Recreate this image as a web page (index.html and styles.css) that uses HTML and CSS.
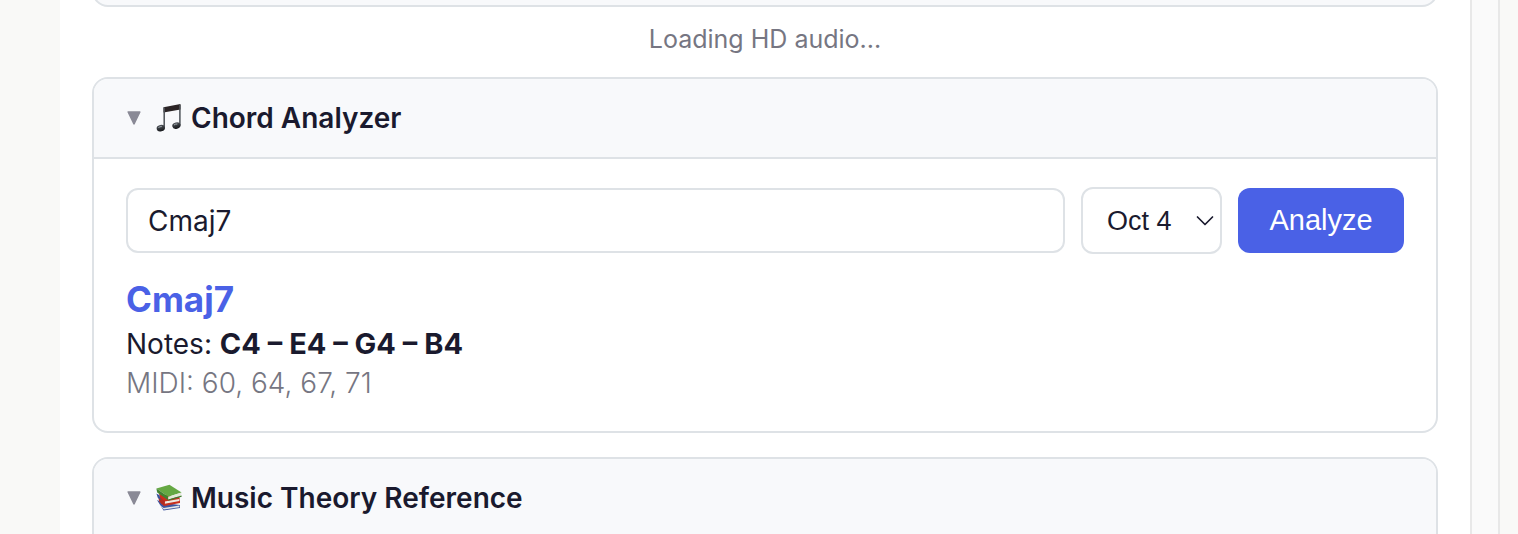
FILE: index.html
```
<!DOCTYPE html>
<html lang="en">
<head>
    <meta charset="UTF-8">
    <meta name="viewport" content="width=device-width, initial-scale=1.0">
    <title>Chord Analyzer</title>
    <link rel="stylesheet" href="styles.css">
</head>
<body>
    <div class="frame">
        <main class="content">
            <div class="panel player"></div>
            <p class="status">Loading HD audio...</p>

            <details class="panel" open>
                <summary>
                    <svg class="marker" viewBox="0 0 14 14"><path d="M1.2 1h11.6L7 12.8z" fill="#8a8a96" stroke="#8a8a96" stroke-width="1.6" stroke-linejoin="round"/></svg>
                    <svg class="icon" viewBox="0 0 28 30">
                        <defs>
                            <linearGradient id="ink" x1="0" y1="0" x2="0" y2="1">
                                <stop offset="0" stop-color="#50545a"/>
                                <stop offset="1" stop-color="#15171a"/>
                            </linearGradient>
                        </defs>
                        <path d="M8.5 4.3L25.5 1v5.6L8.5 9.4z" fill="#2b2425"/>
                        <path d="M9.2 4.5V25M24.9 2V22.5" fill="none" stroke="#4d5257" stroke-width="1.5"/>
                        <ellipse cx="5.8" cy="25.2" rx="4.2" ry="3.2" transform="rotate(-14 5.8 25.2)" fill="url(#ink)"/>
                        <ellipse cx="21.4" cy="22.6" rx="4.2" ry="3.2" transform="rotate(-14 21.4 22.6)" fill="url(#ink)"/>
                        <path d="M3.4 24.6q1.6-1.2 3.4-1M19 22q1.6-1.2 3.4-1" fill="none" stroke="#a3abb0" stroke-width="1"/>
                    </svg>
                    <span>Chord Analyzer</span>
                </summary>
                <div class="panel-body">
                    <form class="controls">
                        <input type="text" id="chord" value="Cmaj7" aria-label="Chord">
                        <div class="select">
                            <select id="octave" aria-label="Octave">
                                <option>Oct 3</option>
                                <option selected>Oct 4</option>
                                <option>Oct 5</option>
                            </select>
                            <svg viewBox="0 0 18 12"><path d="M1.5 2L9 9.5 16.5 2" fill="none" stroke="#1a1a2e" stroke-width="1.7" stroke-linecap="round" stroke-linejoin="round"/></svg>
                        </div>
                        <button type="button">Analyze</button>
                    </form>
                    <h2>Cmaj7</h2>
                    <p class="notes">Notes: <strong>C4 – E4 – G4 – B4</strong></p>
                    <p class="midi">MIDI: 60, 64, 67, 71</p>
                </div>
            </details>

            <details class="panel" open>
                <summary>
                    <svg class="marker" viewBox="0 0 14 14"><path d="M1.2 1h11.6L7 12.8z" fill="#8a8a96" stroke="#8a8a96" stroke-width="1.6" stroke-linejoin="round"/></svg>
                    <svg class="icon" viewBox="0 0 28 30">
                        <path d="M2 17l6.5 10.4L25 25v-3L9 20z" fill="#3f56a0"/>
                        <path d="M4 21.4l4.6 3.6L24.4 22.6v1.6L8.8 26.6z" fill="#e4e6e8"/>
                        <path d="M4 11l2.2 9.6 3 2.4L25 20v-2l-.6-4z" fill="#c9301f"/>
                        <path d="M9.6 18.6L24.4 16v2L9.8 20.8z" fill="#efe9e2"/>
                        <path d="M2.6 12l7.4 6.6-.8 4.2L4.4 19z" fill="#b32b22"/>
                        <path d="M1.4 10.6l3 1.6 1.4 5-3-2.4z" fill="#35539d"/>
                        <path d="M1.4 5.4L14.4 1.8l12.2 7.8-13.4 4.2z" fill="#65a843"/>
                        <path d="M1.4 5.4l11.8 8.4v3.4L2.2 9.4z" fill="#41812f"/>
                        <path d="M13.2 13.8l13.4-4.2-.6 3.2-12.8 4z" fill="#e3e8da"/>
                        <path d="M13.2 16.6l13.4-4v1.2L13.2 17.8z" fill="#3c7a2c"/>
                    </svg>
                    <span>Music Theory Reference</span>
                </summary>
                <div class="panel-body"></div>
            </details>
        </main>
        <div class="gutter"></div>
    </div>
</body>
</html>
```
FILE: styles.css
```
* {
    box-sizing: border-box;
}
body {
    margin: 0;
    background: #f9f9f7;
    color: #1a1a2e;
    font-family: Inter, "Liberation Sans", sans-serif;
    font-size: 28px;
}
.frame {
    display: flex;
    height: 100vh;
    margin: 0 18px 0 60px;
    background: #fff;
    overflow: hidden;
}
.content {
    flex: 1;
    padding: 0 32px;
}
.gutter {
    width: 30px;
    background: #fafafa;
    border: solid #e8e8e8;
    border-width: 0 2px;
}
.panel {
    margin-bottom: 24px;
    border: 2px solid #dee2e6;
    border-radius: 16px;
    overflow: hidden;
}
/* scrolled out of view except for its lower edge */
.player {
    height: 40px;
    margin: -33px 0 0;
    background: #f8f9fb;
}
.status {
    margin: 0;
    padding: 12px 0 18px;
    color: #767682;
    font-size: 25px;
    line-height: 40px;
    text-align: center;
}
summary {
    display: flex;
    align-items: center;
    height: 80px;
    padding: 0 32px;
    background: #f8f9fb;
    border-bottom: 2px solid #dee2e6;
    font-weight: 600;
    list-style: none;
    cursor: pointer;
}
.marker {
    width: 14px;
    height: 14px;
    margin: 0 14px 0 1px;
}
.icon {
    width: 28px;
    height: 30px;
    margin-right: 8px;
}
.panel-body {
    padding: 28px 32px;
}
.controls {
    display: flex;
    align-items: center;
    gap: 16px;
    margin-bottom: 23px;
}
.controls input,
.controls select,
.controls button {
    margin: 0;
    border: 2px solid #dee2e6;
    border-radius: 12px;
    background: #fff;
    color: inherit;
    font-family: "Liberation Sans", Arial, sans-serif;
    font-size: 28px;
}
.controls input {
    flex: 1;
    min-width: 0;
    height: 65px;
    padding: 0 20px;
    font-family: inherit;
}
.select {
    position: relative;
}
.controls select {
    display: block;
    appearance: none;
    width: 141px;
    height: 67px;
    padding: 0 24px;
    font-size: 27px;
}
.select svg {
    position: absolute;
    top: 28px;
    right: 8px;
    width: 18px;
    height: 12px;
    pointer-events: none;
}
.controls button {
    width: 166px;
    height: 65px;
    border: 0;
    background: #4a61e6;
    color: #fff;
    font-size: 29px;
}
h2 {
    margin: 0 0 4px;
    color: #4a61e6;
    font-size: 35px;
    line-height: 44px;
}
.notes,
.midi {
    margin: 0;
    line-height: 39px;
}
.notes strong {
    font-size: 29px;
    line-height: 1;
}
.midi {
    color: #767682;
    font-weight: 300;
}
```
